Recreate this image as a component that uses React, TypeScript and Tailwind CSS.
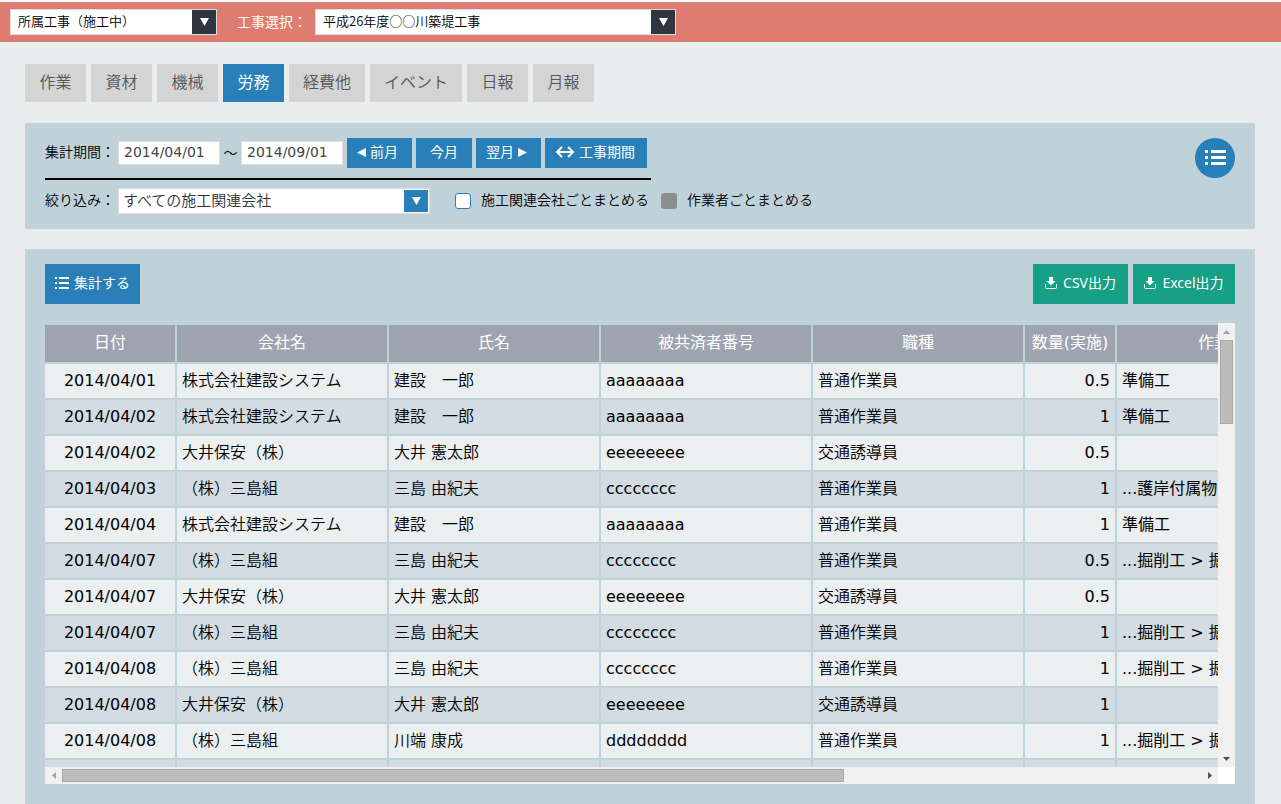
import { useState } from 'react';
import type { ReactNode } from 'react';

const TABS = ['作業', '資材', '機械', '労務', '経費他', 'イベント', '日報', '月報'];

const COLUMNS = [
  { label: '日付', width: 'w-[132px]' },
  { label: '会社名', width: 'w-[212px]' },
  { label: '氏名', width: 'w-[212px]' },
  { label: '被共済者番号', width: 'w-[212px]' },
  { label: '職種', width: 'w-[212px]' },
  { label: '数量(実施)', width: 'w-[92px]' },
  { label: '作業名', width: 'w-[212px]' },
];

interface LaborRow {
  date: string;
  company: string;
  name: string;
  code: string;
  job: string;
  amount: string;
  work: string;
}

const ROWS: LaborRow[] = [
  { date: '2014/04/01', company: '株式会社建設システム', name: '建設　一郎', code: 'aaaaaaaa', job: '普通作業員', amount: '0.5', work: '準備工' },
  { date: '2014/04/02', company: '株式会社建設システム', name: '建設　一郎', code: 'aaaaaaaa', job: '普通作業員', amount: '1', work: '準備工' },
  { date: '2014/04/02', company: '大井保安（株）', name: '大井 憲太郎', code: 'eeeeeeee', job: '交通誘導員', amount: '0.5', work: '' },
  { date: '2014/04/03', company: '（株）三島組', name: '三島 由紀夫', code: 'cccccccc', job: '普通作業員', amount: '1', work: '...護岸付属物' },
  { date: '2014/04/04', company: '株式会社建設システム', name: '建設　一郎', code: 'aaaaaaaa', job: '普通作業員', amount: '1', work: '準備工' },
  { date: '2014/04/07', company: '（株）三島組', name: '三島 由紀夫', code: 'cccccccc', job: '普通作業員', amount: '0.5', work: '...掘削工 > 掘' },
  { date: '2014/04/07', company: '大井保安（株）', name: '大井 憲太郎', code: 'eeeeeeee', job: '交通誘導員', amount: '0.5', work: '' },
  { date: '2014/04/07', company: '（株）三島組', name: '三島 由紀夫', code: 'cccccccc', job: '普通作業員', amount: '1', work: '...掘削工 > 掘' },
  { date: '2014/04/08', company: '（株）三島組', name: '三島 由紀夫', code: 'cccccccc', job: '普通作業員', amount: '1', work: '...掘削工 > 掘' },
  { date: '2014/04/08', company: '大井保安（株）', name: '大井 憲太郎', code: 'eeeeeeee', job: '交通誘導員', amount: '1', work: '' },
  { date: '2014/04/08', company: '（株）三島組', name: '川端 康成', code: 'dddddddd', job: '普通作業員', amount: '1', work: '...掘削工 > 掘' },
  { date: '', company: '', name: '', code: '', job: '', amount: '', work: '' },
];

type Direction = 'up' | 'down' | 'left' | 'right';

const TRIANGLES: Record<Direction, string> = {
  up: '0,10 10,10 5,0',
  down: '0,0 10,0 5,10',
  left: '10,0 10,10 0,5',
  right: '0,0 0,10 10,5',
};

function Triangle({ dir, className }: { dir: Direction; className: string }) {
  return (
    <svg viewBox="0 0 10 10" preserveAspectRatio="none" className={className} fill="currentColor" aria-hidden="true">
      <polygon points={TRIANGLES[dir]} />
    </svg>
  );
}

function ListIcon() {
  return (
    <svg width="21" height="15" viewBox="0 0 21 15" fill="currentColor" shapeRendering="crispEdges" aria-hidden="true">
      <path d="M0 0h3v3H0zM6 0h15v3H6zM0 6h3v3H0zM6 6h15v3H6zM0 12h3v3H0zM6 12h15v3H6z" />
    </svg>
  );
}

function SmallListIcon() {
  return (
    <svg width="14" height="12" viewBox="0 0 14 12" fill="currentColor" shapeRendering="crispEdges" aria-hidden="true">
      <path d="M0 0h2v2H0zM4 0h10v2H4zM0 5h2v2H0zM4 5h10v2H4zM0 10h2v2H0zM4 10h10v2H4z" />
    </svg>
  );
}

function DownloadIcon() {
  return (
    <svg width="12" height="12" viewBox="0 0 12 12" fill="none" aria-hidden="true">
      <path d="M4 0h4v4h2.500L6 8.500 1.500 4H4z" fill="currentColor" />
      <path d="M.5 7v3.5a1 1 0 0 0 1 1h9a1 1 0 0 0 1-1V7" stroke="currentColor" />
    </svg>
  );
}

function RangeIcon() {
  return (
    <svg width="20" height="12" viewBox="0 0 20 12" fill="none" stroke="currentColor" strokeWidth="2" aria-hidden="true">
      <path d="M2 6h16M7 1 2 6l5 5M13 1l5 5-5 5" />
    </svg>
  );
}

interface SelectBoxProps {
  id: string;
  option: string;
  className: string;
  textClass: string;
  arrowClass: string;
  label?: string;
}

function SelectBox({ id, option, className, textClass, arrowClass, label }: SelectBoxProps) {
  return (
    <div className={`flex h-[26px] border border-[#ddd] bg-white ${className}`}>
      <select
        id={id}
        aria-label={label}
        className={`min-w-0 flex-1 appearance-none bg-white pb-[2px] font-['Noto_Sans_CJK_JP',sans-serif] outline-none ${textClass}`}
      >
        <option>{option}</option>
      </select>
      <span className={`flex w-6 items-center justify-center text-white ${arrowClass}`}>
        <Triangle dir="down" className="h-2 w-[9px]" />
      </span>
    </div>
  );
}

function BlueButton({ className, children }: { className: string; children: ReactNode }) {
  return (
    <button type="button" className={`flex h-[30px] items-center bg-[#2980b9] pb-[2px] text-sm font-normal text-white ${className}`}>
      {children}
    </button>
  );
}

function ExportButton({ className, children }: { className: string; children: ReactNode }) {
  return (
    <button type="button" className={`flex h-10 items-center justify-center gap-[6px] bg-[#16a085] pb-[2px] text-sm font-normal text-white ${className}`}>
      <DownloadIcon />
      {children}
    </button>
  );
}

function DateInput({ label, value }: { label: string; value: string }) {
  return (
    <input
      type="text"
      aria-label={label}
      defaultValue={value}
      className="h-6 w-[102px] border border-[#ddd] bg-white px-[5px] pb-[2px] font-['DejaVu_Sans',sans-serif] text-sm font-normal text-[#444] outline-none"
    />
  );
}

function LaborTable() {
  const cell = 'h-9 overflow-hidden border-r-2 border-b-2 border-[#c0d2d9] px-[5px] pb-px whitespace-nowrap';

  return (
    <div className="grid grid-cols-[minmax(0,1fr)_17px] bg-white">
      <div className="h-[444px] overflow-auto bg-[#c0d2d9] pt-[2px] [scrollbar-width:none]">
        <table className="w-[1284px] table-fixed border-separate border-spacing-0 font-['DejaVu_Sans','Noto_Sans_CJK_JP',sans-serif] text-base leading-6 text-black">
          <thead>
            <tr className="bg-[#9da4b0] text-white">
              {COLUMNS.map((col) => (
                <th key={col.label} className={`h-[39px] border-r-2 border-b-2 border-[#c0d2d9] pb-[2px] font-normal whitespace-nowrap ${col.width}`}>
                  {col.label}
                </th>
              ))}
            </tr>
          </thead>
          <tbody>
            {ROWS.map((row, i) => (
              <tr key={i} className="odd:bg-[#ebeff0] even:bg-[#d3dce2]">
                <td className={`${cell} text-center font-normal`}>{row.date}</td>
                <td className={cell}>{row.company}</td>
                <td className={cell}>{row.name}</td>
                <td className={`${cell} font-normal`}>{row.code}</td>
                <td className={cell}>{row.job}</td>
                <td className={`${cell} text-right font-normal`}>{row.amount}</td>
                <td className={`${cell} font-normal`}>{row.work}</td>
              </tr>
            ))}
          </tbody>
        </table>
      </div>

      <div className="flex flex-col items-center bg-[#f1f1f1]">
        <span className="flex h-[17px] items-center text-[#a3a3a3]">
          <Triangle dir="up" className="h-1 w-[7px]" />
        </span>
        <div className="h-[84px] w-[13px] border border-[#a8a8a8] bg-[#bcbcbc]" />
        <span className="mt-auto flex h-[17px] items-center text-[#505050]">
          <Triangle dir="down" className="h-1 w-[7px]" />
        </span>
      </div>

      <div className="flex h-[17px] items-center bg-[#f1f1f1]">
        <span className="flex w-[17px] justify-center text-[#a3a3a3]">
          <Triangle dir="left" className="h-[7px] w-1" />
        </span>
        <div className="grid flex-1 grid-cols-[782fr_357fr]">
          <div className="h-[13px] border border-[#a8a8a8] bg-[#bcbcbc]" />
        </div>
        <span className="flex w-[17px] justify-center text-[#505050]">
          <Triangle dir="right" className="h-[7px] w-1" />
        </span>
      </div>
    </div>
  );
}

export default function App() {
  const [activeTab, setActiveTab] = useState('労務');

  return (
    <div className="min-h-screen bg-[#e9edee] font-['Noto_Sans','Noto_Sans_CJK_JP',sans-serif] text-sm font-[350] text-black">
      <header className="flex h-[42px] items-center border-t-2 border-white bg-[#df7c71] px-[10px]">
        <SelectBox
          id="category"
          label="工事区分"
          option="所属工事（施工中）"
          className="w-[207px]"
          textClass="pl-[7px] text-[13px]"
          arrowClass="bg-[#2f3640]"
        />
        <label htmlFor="project" className="ml-5 w-[78px] pb-px font-normal whitespace-nowrap text-white">
          工事選択：
        </label>
        <SelectBox
          id="project"
          option="平成26年度○○川築堤工事"
          className="w-[361px]"
          textClass="pl-[7px] text-[13px]"
          arrowClass="bg-[#2f3640]"
        />
      </header>

      <main className="px-[25px] pt-[22px] pr-[26px]">
        <nav className="flex gap-[5px]">
          {TABS.map((tab) => (
            <button
              key={tab}
              type="button"
              onClick={() => setActiveTab(tab)}
              className={`h-[38px] min-w-[61px] px-3.5 pb-[2px] text-base ${
                activeTab === tab ? 'bg-[#2980b9] font-normal text-white' : 'bg-[#d4d4d4] text-[#555]'
              }`}
            >
              {tab}
            </button>
          ))}
        </nav>

        <section className="mt-[21px] flex items-start justify-between bg-[#c0d2d9] px-5 py-[15px]">
          <div>
            <div className="flex w-[606px] items-center border-b-2 border-black pb-[10px]">
              <span className="w-[73px] pb-[2px] whitespace-nowrap">集計期間：</span>
              <DateInput label="開始日" value="2014/04/01" />
              <span className="w-[21px] text-center">～</span>
              <DateInput label="終了日" value="2014/09/01" />
              <div className="ml-1 flex gap-1">
                <BlueButton className="w-[65px] gap-1 pl-[10px]">
                  <Triangle dir="left" className="h-[9px] w-[9px]" />
                  前月
                </BlueButton>
                <BlueButton className="w-14 justify-center">今月</BlueButton>
                <BlueButton className="w-[65px] gap-1 pl-[10px]">
                  翌月
                  <Triangle dir="right" className="h-[9px] w-[9px]" />
                </BlueButton>
                <BlueButton className="w-[102px] gap-1 pl-[10px]">
                  <RangeIcon />
                  工事期間
                </BlueButton>
              </div>
            </div>

            <div className="mt-2 flex items-center">
              <label htmlFor="company" className="w-[73px] pb-[2px] whitespace-nowrap">
                絞り込み：
              </label>
              <SelectBox
                id="company"
                option="すべての施工関連会社"
                className="w-[312px] pr-px"
                textClass="pl-[4px] text-[15px] text-[#333]"
                arrowClass="bg-[#2980b9] my-px"
              />
              <label className="ml-[25px] flex items-center gap-[10px]">
                <input type="checkbox" className="h-4 w-4 appearance-none rounded-[3px] border border-[#2980b9] bg-white checked:bg-[#2980b9]" />
                <span className="pb-[2px]">施工関連会社ごとまとめる</span>
              </label>
              <label className="ml-3 flex items-center gap-[10px]">
                <input type="checkbox" disabled className="h-4 w-4 appearance-none rounded-[3px] bg-[#8e8e8e]" />
                <span className="pb-[2px]">作業者ごとまとめる</span>
              </label>
            </div>
          </div>

          <button type="button" aria-label="一覧" className="flex h-10 w-10 items-center justify-center rounded-full bg-[#2980b9] pb-px text-white">
            <ListIcon />
          </button>
        </section>

        <section className="mt-5 bg-[#c0d2d9] px-5 pt-[15px] pb-5">
          <div className="mb-[19px] flex justify-between">
            <button type="button" className="flex h-10 w-[95px] items-center justify-center gap-[5px] bg-[#2980b9] pb-[2px] text-sm font-normal text-white">
              <SmallListIcon />
              集計する
            </button>
            <div className="flex gap-[5px]">
              <ExportButton className="w-[95px]">CSV出力</ExportButton>
              <ExportButton className="w-[102px]">Excel出力</ExportButton>
            </div>
          </div>
          <LaborTable />
        </section>
      </main>
    </div>
  );
}
